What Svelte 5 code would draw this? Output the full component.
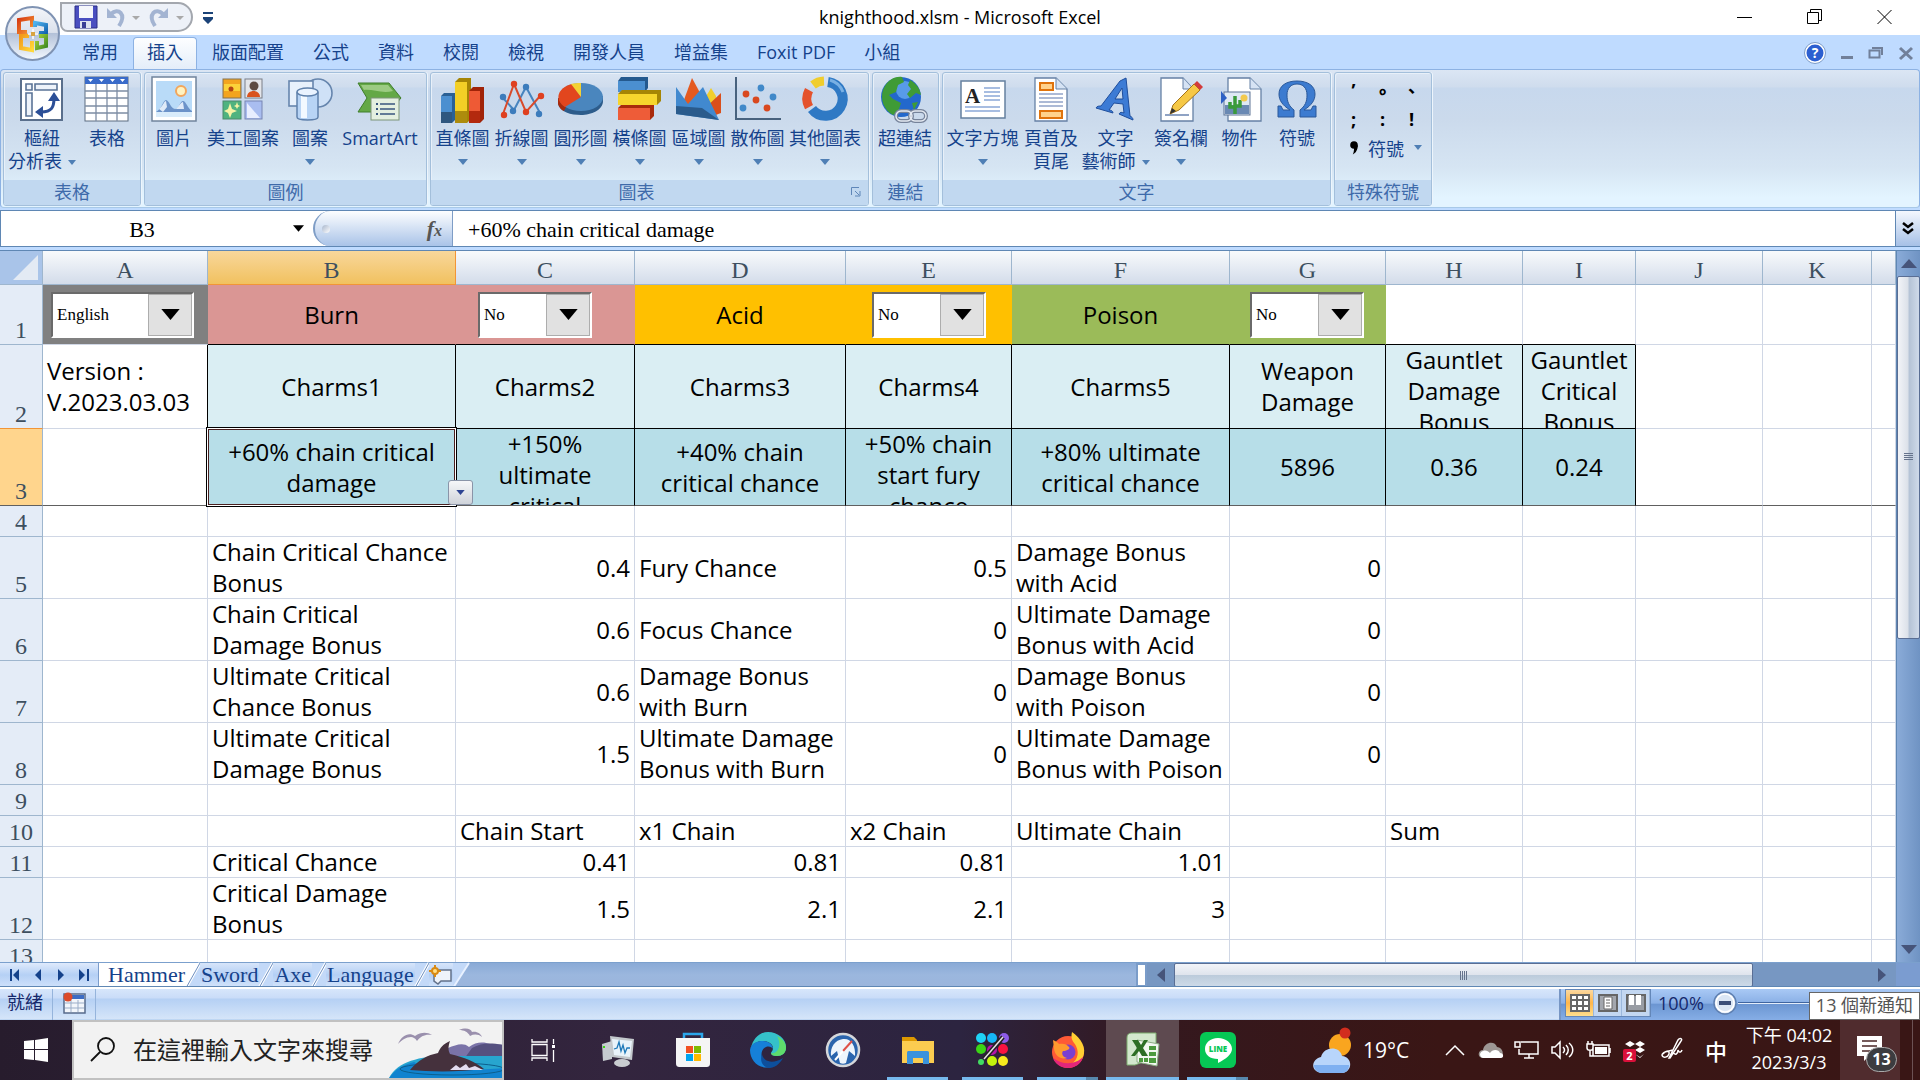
<script>
  const menu = ['常用', '插入', '版面配置', '公式', '資料', '校閱', '檢視', '開發人員', '增益集', 'Foxit PDF', '小組'];

  const groups = [
    { name: '表格', cls: 'tables', items: [['pivot', '樞紐\n分析表', 'inline'], ['table', '表格']] },
    { name: '圖例', cls: 'art', items: [['picture', '圖片'], ['clip', '美工圖案'], ['shapes', '圖案', 'below'], ['smart', 'SmartArt']] },
    {
      name: '圖表', cls: 'charts', launcher: true,
      items: [['column', '直條圖', 'below'], ['line', '折線圖', 'below'], ['pie', '圓形圖', 'below'], ['bar', '橫條圖', 'below'], ['area', '區域圖', 'below'], ['scatter', '散佈圖', 'below'], ['ring', '其他圖表', 'below']]
    },
    { name: '連結', cls: 'links', items: [['globe', '超連結']] },
    {
      name: '文字', cls: 'texts',
      items: [['textbox', '文字方塊', 'below'], ['header', '頁首及\n頁尾'], ['wordart', '文字\n藝術師', 'inline'], ['sign', '簽名欄', 'below'], ['object', '物件'], ['omega', '符號']]
    }
  ];

  const cols = [['A', 165], ['B', 248], ['C', 179], ['D', 211], ['E', 166], ['F', 218], ['G', 156], ['H', 137], ['I', 113], ['J', 127], ['K', 109]];

  const rows = [
    { h: 60, kind: 'toggles', c: ['@English', 'Burn', '@No', 'Acid', '@No', 'Poison', '@No'] },
    { h: 84, kind: 'charms', c: ['Version :\nV.2023.03.03', 'Charms1', 'Charms2', 'Charms3', 'Charms4', 'Charms5', 'Weapon\nDamage', 'Gauntlet\nDamage\nBonus', 'Gauntlet\nCritical\nBonus'] },
    { h: 77, kind: 'picked', c: ['', '+60% chain critical\ndamage', '+150%\nultimate\ncritical', '+40% chain\ncritical chance', '+50% chain\nstart fury\nchance', '+80% ultimate\ncritical chance', '5896', '0.36', '0.24'] },
    { h: 31, c: [] },
    { h: 62, c: ['', 'Chain Critical Chance\nBonus', 0.4, 'Fury Chance', 0.5, 'Damage Bonus\nwith Acid', 0] },
    { h: 62, c: ['', 'Chain Critical\nDamage Bonus', 0.6, 'Focus Chance', 0, 'Ultimate Damage\nBonus with Acid', 0] },
    { h: 62, c: ['', 'Ultimate Critical\nChance Bonus', 0.6, 'Damage Bonus\nwith Burn', 0, 'Damage Bonus\nwith Poison', 0] },
    { h: 62, c: ['', 'Ultimate Critical\nDamage Bonus', 1.5, 'Ultimate Damage\nBonus with Burn', 0, 'Ultimate Damage\nBonus with Poison', 0] },
    { h: 31, c: [] },
    { h: 31, c: ['', '', 'Chain Start', 'x1 Chain', 'x2 Chain', 'Ultimate Chain', '', 'Sum'] },
    { h: 31, c: ['', 'Critical Chance', 0.41, 0.81, 0.81, 1.01] },
    { h: 62, c: ['', 'Critical Damage\nBonus', 1.5, 2.1, 2.1, 3] },
    { h: 31, c: [] }
  ];

  const sheets = ['Hammer', 'Sword', 'Axe', 'Language'];
  const apps = [['taskview', '工作檢視', ''], ['monitor', '效能監視器', ''], ['store', 'Microsoft Store', ''], ['edge', 'Edge', ''], ['compass', '瀏覽器', ''], ['folder', '檔案總管', 'run'], ['dots', '繪圖', 'run'], ['fox', 'Firefox', 'run many'], ['excel', 'Excel', 'run active'], ['chat', 'LINE', 'run many']];
</script>

{#snippet icon(n)}
  <svg class="icon" viewBox="0 0 48 48" aria-hidden="true">
    {#if n === 'pivot'}
      <rect x="3" y="3" width="41" height="41" fill="#fff" stroke="#5a6f8c" stroke-width="2" />
      <path d="M8 8h6v6H8zM17 8h22v6H17zM8 17h6v23H8z" fill="#eef3fa" stroke="#5a7396" stroke-width="1.6" />
      <path d="M23 36C34 36 36 31 36 22" fill="none" stroke="#2c4f97" stroke-width="3" />
      <path d="M36 16l6 9H30zM17 36l8-6v12z" fill="#2c4f97" />
    {:else if n === 'table'}
      <rect x="2" y="1" width="43" height="44" fill="#fff" stroke="#5c6c80" />
      <path d="M2 1h43v7H2z" fill="#3a6bc9" />
      <path d="M5 3h5l-2.500 3zM16 3h5l-2.500 3zM27 3h5l-2.500 3zM37 3h5l-2.500 3z" fill="#fff" />
      <path d="M13 8v37M24 8v37M34 8v37M2 15h43M2 22h43M2 30h43M2 37h43" stroke="#7d8da4" stroke-width="1.3" />
    {:else if n === 'picture'}
      <rect x="2" y="1" width="44" height="44" fill="#fff" stroke="#70849c" stroke-width="1.500" />
      <rect x="6" y="5" width="36" height="36" fill="#b9dbf8" />
      <circle cx="31" cy="15" r="5" fill="#fff3c0" stroke="#f2a65c" stroke-width="2" />
      <path d="M6 36c6-3 7-12 10-12s5 9 9 9 5-8 8-8 5 8 9 10v5H6z" fill="#6c93c9" /><path d="M9 33c4-3 5-8 7-8l1 6-4 5zM26 33c3-3 5-7 7-7l1 7z" fill="#dfeaf8" />
      <path d="M6 36h36v5H6z" fill="#d9ecfb" />
    {:else if n === 'clip'}
      <rect x="4" y="3" width="18" height="19" fill="#f3a41f" stroke="#857350" /><path d="M5 8h16v7H5z" fill="#fbd23a" /><circle cx="12" cy="13" r="2.500" fill="#b44413" />
      <rect x="26" y="3" width="17" height="19" fill="#e3e5ea" stroke="#7a7f88" /><circle cx="35" cy="10" r="4.500" fill="#5d4a42" /><path d="M28 21c0-8 13-8 13 0z" fill="#d9531e" />
      <rect x="4" y="25" width="18" height="18" fill="#4fb37f" stroke="#4d8a6c" /><path d="M11 27l2 6 5 2-5 2-2 5-2-5-4-2 4-2zM18 26l1 3 2 1-2 1-1 2-1-2-2-1 2-1z" fill="#f5f3a5" />
      <rect x="26" y="25" width="17" height="18" fill="#a9bdf0" stroke="#7886b3" /><path d="M28 27l13 15H28z" fill="#e8eeff" />
    {:else if n === 'shapes'}
      <circle cx="32" cy="17" r="14" fill="#cfe1f7" stroke="#6685ad" stroke-width="1.6" />
      <rect x="3" y="5" width="24" height="25" fill="#e8f1fc" stroke="#6685ad" stroke-width="1.6" />
      <path d="M11 17v24c0 4 21 4 21 0V17z" fill="#b8d4f5" stroke="#5f80ab" stroke-width="1.500" /><path d="M15 18v24h6V18z" fill="#f3f9ff" />
      <ellipse cx="21.500" cy="16" rx="10.500" ry="4" fill="#eaf3ff" stroke="#5f80ab" stroke-width="1.500" />
    {:else if n === 'smart'}
      <path d="M2 7h31l12 15-12 14H2l9-14z" fill="#64a846" stroke="#3f7e2b" /><path d="M5 9h27l5 6C26 18 17 13 8 14z" fill="#9ccb82" />
      <rect x="15" y="22" width="28" height="22" fill="#e4efe0" stroke="#7d9479" />
      <path d="M24 28h15M24 33h15M24 38h15" stroke="#38567e" stroke-width="1.6" /><path d="M20 27h2v2h-2zM20 32h2v2h-2zM20 37h2v2h-2z" fill="#38567e" />
    {:else if n === 'column'}
      <path d="M2 20l3-3h11v27l-3 3H2z" fill="#2a6095" /><path d="M2 20h11v27H2z" fill="#4b8fd0" /><path d="M2 36h11v11H2z" fill="#2f577f" />
      <path d="M16 6l4-4h12v41l-4 4H16z" fill="#a58505" /><path d="M16 6h12v41H16z" fill="#f3cf26" /><path d="M16 35h12v12H16z" fill="#ad8c0d" />
      <path d="M30 15l4-4h11v32l-4 4H30z" fill="#a02308" /><path d="M30 15h11v32H30z" fill="#ee5a35" /><path d="M30 35h11v12H30z" fill="#b3290e" />
    {:else if n === 'line'}
      <path d="M5 22l11 12L28 11l14 26" fill="none" stroke="#4784bf" stroke-width="2" /><path d="M5 38L16 8l12 28 15-17" fill="none" stroke="#d84a2b" stroke-width="2" />
      <g fill="#3c7cbc"><circle cx="5" cy="21" r="3.200" /><circle cx="15" cy="35" r="3.200" /><circle cx="28" cy="11" r="3.200" /><circle cx="41" cy="38" r="3.200" /></g>
      <g fill="#df4020"><circle cx="6" cy="39" r="3.200" /><circle cx="16" cy="8" r="3.200" /><circle cx="28" cy="36" r="3.200" /><circle cx="43" cy="20" r="3.200" /></g>
    {:else if n === 'pie'}
      <path d="M1 22v6c2 8 13 11 23 11s22-5 22-14v-5z" fill="#2d5c8b" /><path d="M1 22v6c1 3 3 6 6 7l3-6z" fill="#a82a0c" />
      <ellipse cx="24" cy="21" rx="22" ry="14" fill="#4a86be" /><path d="M24 21L8 31C-3 24 0 12 15 8z" fill="#e2461e" /><path d="M24 21L14 8c3-1 6-1 10-1z" fill="#f3d235" />
    {:else if n === 'bar'}
      <path d="M2 5l3-4h27v11l-3 4H2z" fill="#24598e" /><path d="M2 5h27v11H2z" fill="#4b8fd0" />
      <path d="M2 18l4-4h39v11l-4 4H2z" fill="#a58505" /><path d="M2 18h39v11H2z" fill="#f6d52d" />
      <path d="M2 32l3-3h33v11l-4 4H2z" fill="#a82a0c" /><path d="M2 32h32v12H2z" fill="#ee5c38" />
    {:else if n === 'area'}
      <path d="M30 22l6-10 5 8v20z" fill="#f1ce2c" /><path d="M28 34l18-17v20l-8 3z" fill="#d94f1c" /><path d="M6 32L17 2l13 24v12z" fill="#e45a20" />
      <path d="M1 11l12 17L28 11l16 33L1 38z" fill="#4189cf" /><path d="M1 30l26 2 17 12L1 38z" fill="#2a5b8c" />
    {:else if n === 'scatter'}
      <path d="M2 1v42h45" fill="none" stroke="#48627e" stroke-width="2" />
      <g fill="#d9481f"><circle cx="12" cy="18" r="3.400" /><circle cx="22" cy="24" r="3.400" /><circle cx="33" cy="32" r="3.400" /></g>
      <g fill="#4189c9"><circle cx="27" cy="12" r="3.400" /><circle cx="39" cy="21" r="3.400" /><circle cx="9" cy="32" r="3.400" /></g>
    {:else if n === 'ring'}
      <path d="M27 6a17 17 0 1 1-16 27" fill="none" stroke="#2f79c4" stroke-width="10" /><path d="M29 4a20 20 0 0 1 13 12" fill="none" stroke="#79b0e4" stroke-width="3" />
      <path d="M8 31a18 18 0 0 1 0-17" fill="none" stroke="#e4522c" stroke-width="9" /><path d="M12 9a19 19 0 0 1 11-4" fill="none" stroke="#f0cd2d" stroke-width="9" />
    {:else if n === 'globe'}
      <circle cx="20" cy="21" r="20" fill="#2368cc" /><circle cx="24" cy="14" r="9" fill="#6fb1f5" opacity=".7" />
      <path d="M2 14C6 4 14 0 21 1l2 5-6 3-2 7-7 3 4 4 8 4-3 9-5 3C3 34-1 24 2 14zM29 4c7 4 10 9 11 15l-5-2-6 5-3-4 4-5-3-4zM31 27l6-1-4 8z" fill="#3f9b36" />
      <g fill="none" stroke="#76839a" stroke-width="4"><rect x="15" y="35" width="16" height="10" rx="5" /><rect x="29" y="35" width="16" height="10" rx="5" /></g>
      <g fill="none" stroke="#e4e9f1" stroke-width="1.500"><rect x="15" y="35" width="16" height="10" rx="5" /><rect x="29" y="35" width="16" height="10" rx="5" /></g>
    {:else if n === 'textbox'}
      <rect x="2" y="5" width="44" height="37" fill="#fff" stroke="#65809f" stroke-width="1.500" />
      <text x="6" y="27" font-family="Liberation Serif, serif" font-weight="700" font-size="21" fill="#222">A</text>
      <path d="M25 12h16M25 16h16M25 20h16M25 24h16M6 31h35M6 35h35" stroke="#8ba8d8" stroke-width="1.300" />
    {:else if n === 'header'}
      <path d="M8 2h21l11 11v32H8z" fill="#fff" stroke="#6580a5" stroke-width="1.300" /><path d="M29 2v11h11" fill="#d6e3f4" stroke="#6580a5" />
      <rect x="13" y="7" width="13" height="7" fill="#ffd28c" stroke="#e0730c" stroke-width="2" /><rect x="13" y="35" width="22" height="7" fill="#ffd28c" stroke="#e0730c" stroke-width="2" />
      <path d="M12 18h24M12 22h24M12 26h24M12 30h24" stroke="#5a76ad" stroke-width="1.200" />
    {:else if n === 'wordart'}
      <path d="M28 5l6-3 4 38c2 1 3 2 3 4l-14-6c1-2 3-2 5-1l-1-9-9-1-5 7c2 0 4 1 4 3L4 32c1-2 3-2 5-2zM30 12l-7 11h8z" fill="#3c7bd5" stroke="#1f4e9c" />
    {:else if n === 'sign'}
      <path d="M4 2h22l10 11v32H4z" fill="#fff" stroke="#6580a5" stroke-width="1.300" /><path d="M26 2v11h10" fill="#d6e3f4" stroke="#6580a5" />
      <path d="M8 39h24" stroke="#6a84b0" stroke-width="1.500" /><path d="M13 38l3-9L37 8l6 6-21 20z" fill="#f6c845" stroke="#a3731a" /><path d="M37 8l3-3 6 6-3 3z" fill="#d33b3b" /><path d="M13 38l2-6 4 3z" fill="#333" />
    {:else if n === 'object'}
      <path d="M12 2h22l11 11v32H12z" fill="#fff" stroke="#6580a5" stroke-width="1.300" /><path d="M34 2v11h11" fill="#d6e3f4" stroke="#6580a5" />
      <rect x="8" y="16" width="26" height="23" fill="#dfe9f4" stroke="#5e7596" /><path d="M9 29h24v9H9z" fill="#6a89b3" />
      <path d="M19 20v18M14 26v5h5M24 24v6h-5" fill="none" stroke="#3a9a3a" stroke-width="3.500" /><circle cx="28" cy="22" r="3.500" fill="#f2c94e" /><path d="M5 15l6 7-6 6z" fill="#2e61c4" />
    {:else if n === 'omega'}
      <path d="M5 41V30h3l2 4h7C9 29 6 24 6 18 6 10 13 5 24 5s18 5 18 13c0 6-3 11-11 16h7l2-4h3v11H27v-7c5-4 7-8 7-15 0-7-4-11-10-11s-10 4-10 11c0 7 2 11 7 15v7z" fill="#3c7bd0" stroke="#2a5899" />
    {/if}
  </svg>
{/snippet}

{#snippet app(n)}
  <svg class="app-icon" viewBox="0 0 36 36" aria-hidden="true">
    {#if n === 'taskview'}
      <path d="M7 7v3h15V7M7 29v-3h15v3M7 12.500h15v11H7zM28.500 7v5M28.500 18v12" fill="none" stroke="#fff" stroke-width="1.300" /><rect x="27" y="13" width="3" height="3" fill="#fff" />
    {:else if n === 'monitor'}
      <path d="M2 12l10-3v18l-9 2z" fill="#c6cbd0" /><path d="M3 14h2v2H3z" fill="#3bd515" /><path d="M10 4l24 3-2 21-20-3z" fill="#c3c8cc" /><path d="M12 7l20 2-2 16-16-2z" fill="#e9f3fa" />
      <path d="M14 17l3-1 2-6 2 9 2-6 2 8 2-5h3" fill="none" stroke="#1e78b8" stroke-width="1.300" /><ellipse cx="22" cy="31" rx="8" ry="4" fill="#c9ccd0" />
    {:else if n === 'store'}
      <path d="M9 8V2h18v6" fill="none" stroke="#2ba6ea" stroke-width="2.500" /><path d="M1 6h34v25c0 3-1 4-4 4H5c-3 0-4-1-4-4z" fill="#f5f5f5" />
      <path d="M11 14h7v7h-7z" fill="#f25022" /><path d="M19 14h7v7h-7z" fill="#7fba00" /><path d="M11 22h7v7h-7z" fill="#00a4ef" /><path d="M19 22h7v7h-7z" fill="#ffb900" />
    {:else if n === 'edge'}
      <path d="M1 16C3 6 10 0 18 0c10 0 18 7 18 15 0 6-4 9-9 9-4 0-6-1-6-3 0-1 2-2 2-5 0-4-5-7-10-7C7 9 2 12 1 16z" fill="#35c1c9" /><path d="M27 4c6 3 9 7 9 12 0 5-4 8-9 8-4 0-6-1-6-3 5 2 12-6 6-17z" fill="#5fdc6c" />
      <path d="M0 18C1 11 7 9 13 9c6 0 10 4 10 8-1-2-4-3-7-2-5 2-6 9-2 14 2 3 5 5 8 6C9 38 0 29 0 18z" fill="#1680d8" /><path d="M12 22c1 7 10 11 21 4-4 7-9 10-15 10-7-2-8-9-6-14z" fill="#0d4f9c" />
    {:else if n === 'compass'}
      <circle cx="18" cy="18" r="16" fill="#2b65ad" stroke="#d5d7da" stroke-width="2.500" /><path d="M6 24C5 15 10 8 18 7s13 7 12 17l-6-5-3 12c-2 1-4 1-6 0l-3-12z" fill="#eef5fc" /><path d="M27 9L18 19" stroke="#df5148" stroke-width="2" /><path d="M18 19l-8 9" stroke="#fff" stroke-width="2" />
    {:else if n === 'folder'}
      <path d="M2 5h12l3 3v5H2z" fill="#dd9800" /><path d="M2 9h32v22H2z" fill="#fbcc50" /><path d="M7 21c0-2 1-2 2-2h18c2 0 2 1 2 2v11h-6v-6H13v6H7z" fill="#3a92dc" />
    {:else if n === 'dots'}
      <g><circle cx="6" cy="6" r="5" fill="#1fd3f5" /><circle cx="17" cy="6" r="5" fill="#16b7f7" /><circle cx="29" cy="6" r="5" fill="#8d5ce8" /><circle cx="6" cy="17" r="5" fill="#3bd515" /><circle cx="17" cy="18" r="5" fill="#b515a8" /><circle cx="28" cy="17" r="5" fill="#fa1240" /><circle cx="6" cy="30" r="3" fill="#42dc62" /><circle cx="17" cy="29" r="5" fill="#c4f20d" /><circle cx="28" cy="29" r="5" fill="#f7ea1d" /></g>
      <path d="M9 27L28 5" stroke="#222" stroke-width="4.500" /><path d="M9 27L28 5" stroke="#e8dfe8" stroke-width="1.500" />
    {:else if n === 'fox'}
      <circle cx="18" cy="20" r="16" fill="#ff5a36" /><path d="M22 0c9 6 15 16 11 25-3 6-9 9-15 9 9-4 12-12 8-20-2-4-6-6-4-14z" fill="#ffcf33" /><path d="M3 26c2 6 8 10 15 10s13-4 15-11c-7 7-19 9-30 1z" fill="#e3267b" />
      <circle cx="18" cy="20" r="7.500" fill="#7b3fd0" /><path d="M3 8c3 1 5 3 6 4 4-1 8 0 10 3 2 2-3 4-6 4-2 3 0 6 4 7-6 2-12-2-13-9z" fill="#ff9a2e" />
    {:else if n === 'excel'}
      <path d="M2 6c0-4 2-5 6-5h23v24L10 33H2z" fill="#d3e8cd" stroke="#7cae6e" /><path d="M12 8l22 4-2 22-20-4z" fill="#f2f7f0" stroke="#8dae85" />
      <path d="M24 14h7v4h-7zM24 20h7v4h-7zM14 26h4v4h-4zM19 26h4v4h-4zM24 26h7v5h-7z" fill="#4c9a3d" /><path d="M7 8h6l3 5 3-5h4l-5 8 5 8h-6l-3-5-4 5H6l6-8z" fill="#2d6e24" />
    {:else if n === 'chat'}
      <rect x="0" y="0" width="36" height="36" rx="6" fill="#06c755" /><path d="M18 6c8 0 14 5 14 11 0 5-6 10-14 14v-4C10 27 5 23 5 17S10 6 18 6z" fill="#fff" />
      <text x="18" y="20" text-anchor="middle" font-family="Open Sans, sans-serif" font-weight="800" font-size="8" fill="#06c755">LINE</text>
    {/if}
  </svg>
{/snippet}

{#snippet down()}<svg class="down" viewBox="0 0 10 6" aria-hidden="true"><path d="M0 0h10L5 6z" /></svg>{/snippet}

<div class="screen">
  <header class="titlebar">
    <div class="quick">
      <button aria-label="儲存"><svg width="24" height="24" viewBox="0 0 24 24"><path d="M1 1h22v22H1z" fill="#4a4fc0" stroke="#2b2f86" /><path d="M5 1h14v12H5z" fill="#f4f6fb" /><path d="M6 16h11v7H6z" fill="#dfe4ef" /><path d="M8 17h4v6H8z" fill="#3a3f95" /></svg></button>
      <button aria-label="復原"><svg width="36" height="24" viewBox="0 0 36 24"><path d="M5 9c7-7 16 0 8 12" fill="none" stroke="#a3b4d2" stroke-width="4" /><path d="M1 3v10h10z" fill="#a3b4d2" /><path d="M26 11h8l-4 4z" fill="#a9a9a9" /></svg></button>
      <button aria-label="重做"><svg width="36" height="24" viewBox="0 0 36 24"><path d="M13 9C6 2-3 9 5 21" fill="none" stroke="#a3b4d2" stroke-width="4" /><path d="M18 3v10H8z" fill="#a3b4d2" /><path d="M26 11h8l-4 4z" fill="#a9a9a9" /></svg></button>
    </div>
    <button class="more" aria-label="自訂"><svg width="12" height="14" viewBox="0 0 12 14"><path d="M1 1h10v2H1zM1 6h10v2L6 13 1 8z" fill="#1b4378" /></svg></button>
    <h1>knighthood.xlsm - Microsoft Excel</h1>
    <div class="window">
      <button aria-label="最小化"><svg width="16" height="16" viewBox="0 0 16 16"><path d="M0 8.500h15" /></svg></button>
      <button aria-label="還原"><svg width="16" height="16" viewBox="0 0 16 16"><path d="M.5 3.500h11v11H.5zM3.500 3.500v-3h11v11h-3" /></svg></button>
      <button aria-label="關閉"><svg width="16" height="16" viewBox="0 0 16 16"><path d="M.5 1l14 14M14.500 1l-14 14" /></svg></button>
    </div>
  </header>

  <button class="office" aria-label="Office 按鈕">
    <svg viewBox="0 0 57 57">
      <defs>
        <linearGradient id="orb" x2="0" y2="1"><stop offset="0" stop-color="#f4f6fa" /><stop offset=".48" stop-color="#dbe1ec" /><stop offset=".5" stop-color="#b3c1d8" /><stop offset="1" stop-color="#f4f9ff" /></linearGradient>
        <linearGradient id="o1" x2="1" y2="1"><stop offset="0" stop-color="#d63a12" /><stop offset="1" stop-color="#f79a35" /></linearGradient>
        <linearGradient id="o2" x2="1" y2="1"><stop offset="0" stop-color="#4fb2ee" /><stop offset="1" stop-color="#1565b0" /></linearGradient>
        <linearGradient id="o3" x2="1" y2="1"><stop offset="0" stop-color="#f39a1c" /><stop offset="1" stop-color="#ffd83a" /></linearGradient>
        <linearGradient id="o4" x2="1" y2="1"><stop offset="0" stop-color="#a4d138" /><stop offset="1" stop-color="#3f8a22" /></linearGradient>
      </defs>
      <circle cx="28.500" cy="28.500" r="26.500" fill="url(#orb)" stroke="#7f93b3" stroke-width="2" />
      <g fill="none" stroke-width="4">
        <path d="M23 27h-8V15l13-2v9" stroke="url(#o1)" /><path d="M31 22v-4l11 2v8h-7" stroke="url(#o2)" />
        <path d="M25 31h-8v12l11 2v-9" stroke="url(#o3)" /><path d="M33 36v7l9-2V31h-7" stroke="url(#o4)" />
      </g>
      <path d="M29 24v10M24 29h10" stroke="#fff" stroke-width="1.500" /><path d="M27 27h4v4h-4z" fill="#d9a441" />
    </svg>
  </button>

  <nav class="menu">
    {#each menu as m, i}<button class:on={i === 1}>{m}</button>{/each}
    <div class="menu-tools">
      <svg width="22" height="22" viewBox="0 0 22 22"><circle cx="11" cy="11" r="9.500" fill="#2c5fd0" stroke="#fff" stroke-width="2" /><circle cx="11" cy="11" r="10.500" fill="none" stroke="#7c9cc9" /><text x="11" y="16" text-anchor="middle" fill="#fff" font-family="Open Sans" font-weight="700" font-size="14">?</text></svg>
      <svg width="14" height="16" viewBox="0 0 14 16"><path d="M1 11h12v3H1z" fill="#71809a" /></svg>
      <svg width="16" height="16" viewBox="0 0 16 16"><path d="M1.500 5.500h10v7h-10zM4 3h10v7" fill="none" stroke="#71809a" stroke-width="2" /></svg>
      <svg width="16" height="16" viewBox="0 0 16 16"><path d="M2 3l12 11M14 3L2 14" stroke="#71809a" stroke-width="3" /></svg>
    </div>
  </nav>

  <section class="ribbon">
    {#each groups as g}
      <div class="group {g.cls}">
        <div class="tools">
          {#each g.items as [ic, label, arrow]}
            <button>{@render icon(ic)}<span>{label}{#if arrow === 'inline'}{@render down()}{/if}</span>{#if arrow === 'below'}<i>{@render down()}</i>{/if}</button>
          {/each}
        </div>
        <div class="group-name">{g.name}{#if g.launcher}<svg class="launch" width="10" height="10" viewBox="0 0 10 10"><path d="M.5 8V.5H8M4 4l4 4M9 4v5H4" fill="none" stroke="#5f86b8" /></svg>{/if}</div>
      </div>
    {/each}
    <div class="group special">
      <div class="marks">
        <button>’</button><button>∘</button><button>、</button>
        <button>;</button><button>:</button><button>!</button>
        <button class="more-marks"><svg width="8" height="14" viewBox="0 0 8 14"><circle cx="4" cy="4" r="3.800" /><path d="M7.800 4c0 5-2 8-5 9.500C4 11 4 9 4 7z" /></svg>符號{@render down()}</button>
      </div>
      <div class="group-name">特殊符號</div>
    </div>
  </section>

  <div class="formula">
    <div class="name"><input aria-label="名稱方塊" value="B3" />{@render down()}</div>
    <button class="fx" aria-label="插入函數"><span></span><em>f<small>x</small></em></button>
    <input class="expr" aria-label="資料編輯列" value="+60% chain critical damage" />
    <button class="expand" aria-label="展開"><svg width="12" height="14" viewBox="0 0 12 14"><path d="M1 1l5 4 5-4M1 7l5 4 5-4" fill="none" stroke="#000" stroke-width="2.500" /></svg></button>
  </div>

  <main class="book">
    <div class="sheet">
      <table>
        <colgroup><col class="rowhead" />{#each cols as [, w]}<col style="width:{w}px" />{/each}<col /></colgroup>
        <thead>
          <tr><th class="corner" aria-label="全選"><svg viewBox="0 0 26 26"><path d="M26 0v26H0z" /></svg></th>{#each cols as [n]}<th class:picked={n === 'B'}>{n}</th>{/each}<th></th></tr>
        </thead>
        <tbody>
          {#each rows as r, i}
            <tr class={r.kind ?? ''} style="--h:{r.h}px">
              <th>{i + 1}</th>
              {#each [...cols, ['L']] as [n], j}
                {@const v = r.c[j] ?? ''}
                <td class="c{n}">
                  {#if typeof v === 'string' && v[0] === '@'}
                    <div class="combo"><select aria-label="{n}1"><option>{v.slice(1)}</option></select><span>{@render down()}</span></div>
                  {:else if v !== ''}
                    <div class="cell" class:num={typeof v === 'number'}>{v}</div>
                  {/if}
                  {#if i === 2 && n === 'B'}<div class="cursor"></div><button class="pick" aria-label="選擇">{@render down()}</button>{/if}
                </td>
              {/each}
            </tr>
          {/each}
        </tbody>
      </table>
    </div>
    <div class="vscroll">
      <button aria-label="向上"><svg width="16" height="9" viewBox="0 0 16 9"><path d="M0 9l8-9 8 9z" /></svg></button>
      <div class="thumb"><span></span></div>
      <button class="bottom" aria-label="向下"><svg width="16" height="9" viewBox="0 0 16 9"><path d="M0 0h16L8 9z" /></svg></button>
    </div>
  </main>

  <div class="tabs">
    <div class="walk">
      <button aria-label="第一張"><svg width="10" height="12" viewBox="0 0 10 12"><path d="M0 0h2v12H0zM9 0v12L3 6z" /></svg></button>
      <button aria-label="上一張"><svg width="10" height="12" viewBox="0 0 10 12"><path d="M8 0v12L2 6z" /></svg></button>
      <button aria-label="下一張"><svg width="10" height="12" viewBox="0 0 10 12"><path d="M2 0v12l6-6z" /></svg></button>
      <button aria-label="最後一張"><svg width="10" height="12" viewBox="0 0 10 12"><path d="M0 0v12l6-6zM8 0h2v12H8z" /></svg></button>
    </div>
    {#each sheets as s, i}
      <button class="tab" class:front={i === 0}>{s}</button>
      <svg class="slant" class:first={i === 0} width="14" height="25" viewBox="0 0 14 25"><path class="l" d="M0 0h14L0 25z" /><path class="r" d="M14 0v25H0z" /><path d="M14 0L0 25" stroke="#fff" stroke-width="3" /><path d="M14 0L0 25" stroke="#6d8fc0" /></svg>
    {/each}
    <button class="tab new" aria-label="插入工作表"><svg width="24" height="20" viewBox="0 0 24 20"><path d="M5 5h17v11H12l-3 3-4-3z" fill="#eef3fa" stroke="#62718a" stroke-width="1.500" /><circle cx="6" cy="6" r="3" fill="#ffe08a" stroke="#d98a14" stroke-width="2" /><path d="M6 0v3M6 9v3M0 6h3M9 6h3" stroke="#d98a14" stroke-width="2" /></svg></button>
    <svg class="slant" width="16" height="25" viewBox="0 0 16 25"><path class="l" d="M0 0h16L0 25z" /><path d="M16 0L0 25" stroke="#e8f1ff" stroke-width="2" /></svg>
    <div class="hscroll">
      <span class="split"></span>
      <button aria-label="向左"><svg width="8" height="14" viewBox="0 0 8 14"><path d="M8 0v14L0 7z" /></svg></button>
      <div class="thumb"><span></span></div>
      <button class="right" aria-label="向右"><svg width="8" height="14" viewBox="0 0 8 14"><path d="M0 0v14l8-7z" /></svg></button>
    </div>
    <span class="nook"></span>
  </div>

  <footer class="status">
    <span class="ready">就緒</span>
    <button class="macro" aria-label="錄製巨集"><svg width="24" height="22" viewBox="0 0 24 22"><path d="M2 2h21v19H2z" fill="#f3f6fb" stroke="#576b8c" stroke-width="1.500" /><path d="M3 3h19v4H3z" fill="#3c6cc4" /><path d="M3 11h19M3 16h19M9 8v12M16 8v12" stroke="#9badc8" /><circle cx="6" cy="5" r="4.500" fill="#dc4b2a" /></svg></button>
    <div class="views">
      <div class="modes">
        <button class="on" aria-label="標準"><svg width="20" height="18" viewBox="0 0 20 18"><path d="M1 1h18v16H1z" fill="#fff" stroke="#666" stroke-width="2" /><path d="M7 1v16M13 1v16M1 6h18M1 12h18" stroke="#666" stroke-width="2" /></svg></button>
        <button aria-label="整頁模式"><svg width="20" height="18" viewBox="0 0 20 18"><path d="M1 1h18v16H1z" fill="#a3a7ae" stroke="#666" stroke-width="2" /><path d="M6 3h8v12H6z" fill="#fff" stroke="#666" /><path d="M8 6h4M8 9h4M8 12h4" stroke="#666" /></svg></button>
        <button aria-label="分頁預覽"><svg width="20" height="18" viewBox="0 0 20 18"><path d="M1 1h18v16H1z" fill="#999da4" stroke="#666" stroke-width="2" /><path d="M3 1h5v10H3zM10 1h5v10h-5z" fill="#fff" /></svg></button>
      </div>
      <span class="pct">100%</span>
      <button class="minus" aria-label="縮小"><svg width="26" height="26" viewBox="0 0 26 26"><circle cx="13" cy="13" r="11" fill="#dbe6f4" stroke="#5e7fb0" stroke-width="1.500" /><circle cx="13" cy="13" r="9" fill="none" stroke="#fff" stroke-width="1.500" /><path d="M7 11h12v4H7z" fill="#3b4e78" /></svg></button>
      <span class="rail"></span>
    </div>
    <div class="tip">13 個新通知</div>
  </footer>

  <div class="taskbar">
    <button class="start" aria-label="開始"><svg width="24" height="24" viewBox="0 0 24 24"><path d="M0 3l10-1v9H0zM11 2l13-2v11H11zM0 12h10v10L0 21zM11 12h13v12l-13-2z" fill="#fff" /></svg></button>
    <label class="search">
      <svg width="26" height="26" viewBox="0 0 26 26"><circle cx="16" cy="9" r="8" fill="none" stroke="#111" stroke-width="1.800" /><path d="M10 15L1 24" stroke="#111" stroke-width="1.800" /></svg>
      <input placeholder="在這裡輸入文字來搜尋" aria-label="搜尋" />
      <svg class="whale" width="116" height="52" viewBox="0 0 116 52">
        <path d="M60 20c8-3 15-6 21-1 7-6 16-5 21-3 6 1 10 0 14 1v20H50z" fill="#7a73a8" /><path d="M84 20c10-6 20-5 32-3v14H76z" fill="#55507f" />
        <path d="M0 52C8 34 30 28 60 28h56v24z" fill="#27a5cf" /><path d="M0 52c6-10 14-15 26-18 14 8 60 9 90 6v12z" fill="#1183cf" />
        <ellipse cx="64" cy="41" rx="52" ry="6" fill="none" stroke="#0c5f8d" />
        <path d="M22 42c8-10 18-15 28-17 2-5 5-9 12-12-2 6-2 9 0 13 14 3 26 8 34 15-24 3-52 3-74 1z" fill="#45313d" />
        <path d="M62 42l6-5 4 3 6-4 3 4 6-2 8 4z" fill="#e3dcf0" />
        <path d="M10 16c4-9 11-12 17-8 6-4 12-4 17-1-7-1-11 1-15 6-2-3-4-4-6-4-5 0-9 3-13 7zM71 2c7-3 12-1 13 2 5-1 9 2 10 5-4-3-8-3-12-1-2-4-6-6-11-6z" fill="#9a90ad" />
      </svg>
    </label>
    <div class="apps">{#each apps as [n, t, s]}<button class={s} aria-label={t}>{@render app(n)}</button>{/each}</div>
    <div class="tray">
      <button class="weather"><svg width="38" height="46" viewBox="0 0 38 46"><circle cx="27" cy="18" r="11" fill="#f9a51f" /><circle cx="32" cy="6" r="5.500" fill="#d22d1e" /><path d="M9 46c-12-1-11-14-1-16 3-11 19-11 21-1 11 1 11 16 0 17z" fill="#b8d5fb" /><path d="M9 46c-5 0-8-4-8-8h35c0 5-3 8-7 8z" fill="#7fb0f1" /></svg>19°C</button>
      <button aria-label="顯示隱藏的圖示"><svg width="20" height="12" viewBox="0 0 20 12"><path d="M1 11l9-9 9 9" /></svg></button>
      <button aria-label="OneDrive"><svg width="26" height="18" viewBox="0 0 26 18"><path d="M4 17c-5-1-4-8 1-8C6 1 17-1 19 6c6 0 8 9 3 11z" fill="#9d9794" stroke="none" /><path d="M5 17c-4-1-4-6 0-7 3-1 5 0 7 2 2-4 9-4 10 0 4 0 4 5 1 5z" fill="#fff" stroke="none" /></svg></button>
      <button aria-label="網路"><svg width="26" height="20" viewBox="0 0 26 20"><path d="M7 2h17v12H5V9M15 14v4M10 18h10M1 2h5v5H1z" /></svg></button>
      <button aria-label="音量"><svg width="24" height="20" viewBox="0 0 24 20"><path d="M1 7h3l5-5v16l-5-5H1zM12 7c2 2 2 4 0 6M15 5c3 3 3 7 0 10M18 3c5 4 5 10 0 14" /></svg></button>
      <button aria-label="電池"><svg width="26" height="20" viewBox="0 0 26 20"><path d="M7 5h16v11H7zM24 8v5M1 4h6v4c0 3-6 3-6 0zM2 1v3M6 1v3M4 11v5h3" /><path d="M9 7h12v7H9z" fill="#fff" stroke="none" /></svg></button>
      <button class="box" aria-label="Dropbox"><svg width="26" height="20" viewBox="0 0 26 20"><path d="M2 4l5-3 5 3-5 3zM12 4l5-3 5 3-5 3zM12 10l5-3 5 3-5 3zM12 14l5 3 4-3-4 4z" fill="#fff" stroke="none" /></svg><b>2</b></button>
      <button aria-label="手寫筆"><svg width="22" height="24" viewBox="0 0 22 24"><path d="M2 16c3-4 7-3 6 0s-6 5-7 1c0-4 8-4 11-5M8 20L17 2c2-3 5-1 3 1L9 20zM12 14c2 4 5 2 5-2 1 3 3 3 4 0" /></svg></button>
      <button class="ime">中</button>
      <button class="clock">下午 04:02<br />2023/3/3</button>
      <button class="notes" aria-label="通知"><svg width="28" height="30" viewBox="0 0 28 30"><path d="M1 1h25v20H13l-5 5v-5H1z" fill="#fff" stroke="none" /><path d="M6 6h15M6 11h15M6 16h11" stroke="#4a2626" stroke-width="1.500" /></svg><b>13</b></button>
      <span class="peek"></span>
    </div>
  </div>
</div>

<style>
  :global(body) { margin: 0; }
  * { box-sizing: border-box; }
  button, input, select { font: inherit; color: inherit; border: 0; padding: 0; margin: 0; background: none; border-radius: 0; outline: 0; }
  svg { display: block; flex: none; overflow: visible; }
  .screen { height: 100vh; min-width: 1500px; display: flex; flex-direction: column; position: relative; overflow: hidden; background: #bfdbff; color: #000; font-family: "Open Sans", "Noto Sans CJK TC", sans-serif; font-size: 18px; }
  .down { display: inline-block; width: 10px; height: 6px; fill: #4f7fb5; }

  .titlebar { flex: none; height: 35px; background: #fff; display: flex; align-items: flex-start; position: relative; padding-left: 60px; }
  .quick { height: 30px; margin-top: 2px; width: 133px; padding: 0 6px 0 12px; display: flex; align-items: center; gap: 8px; border: 2px solid #a3a7ae; border-radius: 0 16px 16px 0; border-bottom-left-radius: 8px; background: #edf1f8; }
  .more { margin: 11px 0 0 9px; }
  h1 { position: absolute; inset: 0; margin: 0; text-align: center; pointer-events: none; font-size: 18px; font-weight: 400; line-height: 34px; }
  .window { margin-left: auto; display: flex; }
  .window button { width: 70px; height: 34px; display: grid; place-items: center; }
  .window svg { fill: none; stroke: #000; }
  .office { position: absolute; left: 4px; top: 5px; width: 57px; height: 57px; z-index: 2; }

  .menu { flex: none; height: 34px; display: flex; gap: 1px; padding: 2px 6px 0 68px; color: #15428b; }
  .menu > button { padding: 0 14px; line-height: 28px; height: 33px; padding-bottom: 4px; white-space: nowrap; }
  .menu > .on { background: linear-gradient(#fdfeff, #e3edf9); border: 1px solid #8db2e3; border-bottom: 0; border-radius: 4px 4px 0 0; padding: 0 13px 5px; }
  .menu-tools { margin-left: auto; display: flex; gap: 14px; align-items: center; }

  .ribbon { flex: none; height: 139px; display: flex; gap: 3px; padding: 2px 3px 3px 2px; border: 1px solid #8db2e3; border-bottom-color: #a8c9e8; border-radius: 4px; background: linear-gradient(#dbe6f4 0, #cfdced 17px, #c7d8ed 18px, #cbdaec 50px, #d6e5f3 98px, #e3f4ff 128px); }
  .group { flex: none; height: 134px; border: 1px solid #a3bfdb; border-radius: 3px; display: flex; flex-direction: column; box-shadow: inset 1px 1px #e8f0f9, 1px 0 #edf5fc; overflow: hidden; }
  .tools { flex: 1; display: grid; padding: 3px 0 0; justify-content: start; color: #15428b; }
  .tables { width: 138px; } .tables .tools { grid-template-columns: 76px 54px; }
  .art { width: 283px; } .art .tools { grid-template-columns: 58px 80px 54px 86px; }
  .charts { width: 439px; } .charts .tools { grid-template-columns: repeat(6, 59px) 76px; padding-left: 2px; }
  .links { width: 67px; } .links .tools { grid-template-columns: 64px; }
  .texts { width: 389px; } .texts .tools { grid-template-columns: 79px 58px 71px 60px 57px 58px; }
  .special { width: 98px; }
  .tools button { display: flex; flex-direction: column; align-items: center; white-space: pre; }
  .tools span { line-height: 23px; padding-top: 3px; }
  .tools span .down { margin-left: 6px; vertical-align: 3px; width: 8px; height: 5px; }
  .tools i { height: 23px; display: grid; place-items: center; }
  .icon { width: 48px; height: 48px; }
  .group-name { height: 25px; line-height: 25px; text-align: center; background: #c1d8f0; color: #3e6aaa; position: relative; }
  .charts .group-name { padding-right: 26px; }
  .launch { position: absolute; right: 7px; top: 7px; }
  .marks { flex: 1; display: grid; grid-template-columns: repeat(3, 29px); grid-auto-rows: 29px; padding: 2px 0 0 4px; color: #000; font-weight: 700; }
  .more-marks { grid-column: 1 / -1; display: flex; align-items: center; gap: 10px; padding-left: 11px; color: #15428b; font-weight: 400; }
  .more-marks .down { width: 8px; height: 5px; }

  .formula { flex: none; height: 37px; margin: 2px 0 3px; display: flex; border: 1px solid #5f87b4; border-width: 1px 0 1px 1px; background: #fff; font: 22px "Liberation Serif", serif; }
  .formula input { padding-top: 2px; }
  .name { width: 312px; display: flex; align-items: center; padding-right: 9px; }
  .name input { flex: 1; min-width: 0; text-align: center; padding-right: 10px; }
  .name .down { fill: #000; width: 11px; height: 7px; }
  .fx { width: 140px; border: 1px solid #7e9dc6; border-width: 0 1px 0 2px; border-radius: 18px 0 0 18px; background: linear-gradient(#fdfeff, #a9c3e8); display: flex; align-items: center; justify-content: space-between; padding: 0 10px 0 7px; }
  .fx span { width: 8px; height: 8px; border-radius: 50%; background: linear-gradient(135deg, #a7b6cc, #fff); }
  .fx em { font-weight: 700; color: #555; } .fx small { font-size: 16px; }
  .formula .expr { flex: 1; padding-left: 15px; }
  .expand { width: 25px; border-left: 1px solid #5f87b4; background: linear-gradient(#f4f8fe, #a6c0e6); display: grid; place-items: center; }

  .book { flex: 1; min-height: 0; display: flex; }
  .sheet { flex: 1; min-width: 0; overflow: hidden; background: #fff; border-top: 1px solid #5f87b4; }
  table { width: 100%; table-layout: fixed; border-collapse: separate; border-spacing: 0; }
  .rowhead { width: 43px; }
  th { font: 24px/26px "Liberation Serif", serif; color: #3d4f5f; padding: 0; background: #e4ecf7; border: 0 solid #9eb6ce; border-width: 0 1px 1px 0; }
  thead th { height: 34px; padding-top: 4px; background: linear-gradient(#f8fafc, #d3dcea); }
  thead .picked { background: linear-gradient(#f8d79b, #f1c15f); border-color: #f29536; }
  .corner { background: #a9c4e9; padding: 3px 4px 3px 13px; }
  .corner svg { height: 25px; width: 25px; fill: #e3eaf4; }
  tbody th { height: var(--h); vertical-align: bottom; padding-bottom: 1px; }
  td { position: relative; height: var(--h); padding: 0; border: 0 solid #d0d7e5; border-width: 0 1px 1px 0; vertical-align: middle; font-size: 24px; line-height: 31px; }
  .cell { max-height: var(--h); margin-top: -1px; overflow: hidden; padding: 0 4px; white-space: pre; }
  .num { text-align: right; }
  .toggles td:not(.cA), .charms td:not(.cA), .picked td { text-align: center; }
  .toggles .cA { background: gray; border-right-color: gray; }
  .toggles :is(.cB, .cC) { background: #da9694; border-right-color: #da9694; }
  .toggles :is(.cD, .cE) { background: #ffc000; border-right-color: #ffc000; }
  .toggles :is(.cF, .cG) { background: #9bbb59; border-right-color: #9bbb59; }
  .toggles td:not(.cA, .cJ, .cK, .cL) { border-bottom-color: #000; }
  .charms td:not(.cA, .cJ, .cK, .cL) { background: #daeef3; border-color: #000; }
  .picked td:not(.cA, .cJ, .cK, .cL) { background: #b7dee8; border-color: #000; }
  .charms .cA { border-right-color: #000; }
  tbody .picked :is(td, th) { border-bottom-color: #606060 !important; }
  tbody .picked th { background: #ffd58d; }
  .charms th { border-bottom-color: #f29536; }
  .cursor { position: absolute; inset: -2px; border: 1px solid #000; outline: 1px solid #4a2020; outline-offset: -3px; box-shadow: inset 0 0 0 1px #fff; z-index: 1; }
  .pick { position: absolute; right: -18px; bottom: 0; width: 25px; height: 25px; z-index: 2; border: 1px solid #8a94a8; border-radius: 3px; background: linear-gradient(#f6f7f9, #cfd3da); display: grid; place-items: center; }
  .pick .down { fill: #2d4392; width: 9px; height: 5px; }
  .combo { width: 114px; height: 46px; margin-left: 22px; display: flex; background: #fff; border: 2px solid; border-color: #6a6a6a #fff #fff #6a6a6a; position: relative; font: 17px "Liberation Serif", serif; }
  .cA .combo { width: 143px; margin-left: 8px; }
  .cE .combo { margin-left: 26px; } .cG .combo { margin-left: 20px; }
  .combo select { appearance: none; width: 100%; padding-left: 4px; }
  .combo span { position: absolute; right: 0; top: 0; bottom: 0; width: 44px; background: #e1e1e1; border: 1px solid #adadad; display: grid; place-items: center; pointer-events: none; }
  .combo .down { width: 21px; height: 11px; fill: #000; }

  .vscroll { flex: none; width: 24px; display: flex; flex-direction: column; background: linear-gradient(90deg, #8aabd8, #6f93c3); border: 1px solid #5f87b4; border-width: 1px 0 0 1px; }
  .vscroll button { flex: none; height: 25px; display: grid; place-items: center; }
  .vscroll svg, .hscroll svg { fill: #46547a; }
  .thumb { border: 1px solid #5a6e94; border-radius: 2px; background: linear-gradient(90deg, #f2f4f8, #dde2ea 45%, #b5c3d6 55%, #cfdaea); display: grid; place-items: center; }
  .vscroll .thumb { flex: 0 0 51%; }
  .vscroll .thumb span { width: 9px; height: 8px; background: repeating-linear-gradient(#66738c 0 1px, transparent 1px 2px); }
  .vscroll .bottom { margin-top: auto; }

  .tabs { flex: none; height: 25px; display: flex; background: linear-gradient(#8aaad6, #9bb7de 50%, #9bb5dc); border-top: 1px solid #7ba0cd; font: 22px/24px "Liberation Serif", serif; color: #15428b; }
  .walk { width: 99px; display: flex; padding: 0 3px 0 3px; background: linear-gradient(#dfeafc, #b5d0f5 50%, #cfe1fb); border-right: 1px solid #7b9ccb; }
  .walk button { flex: 1; display: grid; place-items: center; fill: #15428b; }
  .tab { background: linear-gradient(#d7e5fa, #b3cff5 50%, #d3e4fb); padding: 0 1px; }
  .front { background: #fff; padding: 0 1px 0 9px; }
  .new { padding: 0; }
  .slant .l, .slant .r { fill: #c3d9f8; }
  .slant.first .l { fill: #fff; }
  .hscroll { flex: 0 0 760px; margin-left: auto; display: flex; background: #7797c2; }
  .split { width: 11px; background: #fff; border: 2px solid #7a9cc9; }
  .hscroll button { width: 27px; display: grid; place-items: center; }
  .hscroll .thumb { flex: 1; background: linear-gradient(#f2f4f9, #dfe4ed 48%, #bccbdb 52%, #cddae8); }
  .hscroll .thumb span { width: 8px; height: 9px; background: repeating-linear-gradient(90deg, #66738c 0 1px, transparent 1px 2px); }
  .hscroll .right { width: 143px; justify-content: end; padding-right: 10px; }
  .nook { width: 24px; background: #7b9cd0; }

  .status { flex: none; height: 33px; display: flex; border-top: 2px solid #fff; background: linear-gradient(#d7e6fb, #c9dcf8 9px, #b5d0f4 10px, #d5e5f9 30px, #a8c8ec); box-shadow: 0 -1px #5f87b4; color: #15286b; position: relative; line-height: 26px; }
  .ready { width: 53px; padding-left: 7px; border-right: 1px solid #95b4dc; }
  .macro { width: 43px; padding-bottom: 4px; display: grid; place-items: center; border-right: 1px solid #95b4dc; }
  .views { margin-left: auto; width: 361px; display: flex; align-items: center; padding: 0 0 3px 4px; background: linear-gradient(#a9c9f5, #8ab0e6 45%, #6c96d2 50%, #86aee6); border-left: 2px solid #7796c4; }
  .modes { display: flex; border: 1px solid #6487b8; background: #c3d7f1; height: 28px; }
  .modes button { width: 28px; display: grid; place-items: center; border-right: 1px solid #9cb8dc; }
  .modes .on { background: linear-gradient(#fbd8a0, #ffb64a 50%, #ffdf8e); }
  .pct { width: 61px; padding-left: 7px; }
  .rail { flex: 1; height: 2px; background: #3f65a0; border-bottom: 1px solid #e3edfa; }
  .tip { position: absolute; right: 0; top: 3px; width: 111px; height: 28px; line-height: 24px; background: #fff; border: 1px solid #666; color: #555; text-align: center; white-space: nowrap; }

  .taskbar { flex: none; height: 60px; display: flex; background: linear-gradient(90deg, #271c2d, #33253e 32%, #2c2440 50%, #34181e 60%, #3a1615 75%, #391615); color: #fff; }
  .start { width: 72px; display: grid; place-items: center; }
  .search { width: 432px; display: flex; align-items: center; background: #f2f2f2; border: 2px solid #c1c1c1; padding-left: 16px; position: relative; overflow: hidden; }
  .search input { flex: 1; padding: 0 0 2px 17px; font-size: 24px; }
  .search input::placeholder { color: #222; opacity: 1; }
  .whale { position: absolute; right: -2px; bottom: -2px; }
  .apps { display: flex; flex: 1; min-width: 0; padding-left: 2px; }
  .apps button { flex: none; width: 73px; margin-right: 2px; position: relative; display: grid; place-items: center; }
  .app-icon { width: 36px; height: 36px; }
  .run::after { content: ""; position: absolute; left: 6px; right: 6px; bottom: 0; height: 3px; background: #76b9ed; }
  .many::after { background: linear-gradient(90deg, #76b9ed 80%, #5788ad 80%); }
  .active { background: #5e4a50; } .active::after { left: 0; right: 0; }
  .tray { display: flex; align-items: center; }
  .tray button { width: 36px; height: 60px; display: grid; place-items: center; position: relative; }
  .tray svg { fill: none; stroke: #fff; stroke-width: 1.500; }
  .tray .weather svg { stroke: none; }
  .tray .weather { display: flex; width: 124px; align-items: center; gap: 12px; font-size: 21px; }
  .box b { position: absolute; left: 6px; top: 29px; width: 13px; height: 13px; background: #d9103a; border-radius: 2px; font-size: 11px; line-height: 13px; }
  .tray .box { width: 37px; }
  .tray .ime { width: 52px; font-size: 22px; font-weight: 500; }
  .tray .clock { width: 98px; line-height: 27px; display: block; padding: 0 4px 2px 0; }
  .tray .notes { width: 60px; background: #502c2e; }
  .notes b { position: absolute; right: 3px; bottom: 8px; width: 31px; height: 25px; border-radius: 13px; background: #3c3c40; border: 1px solid #aaa; font-size: 16px; line-height: 22px; }
  .peek { width: 20px; height: 60px; background: linear-gradient(90deg, transparent 12px, #6c5254 12px 13px, transparent 13px); }
</style>
